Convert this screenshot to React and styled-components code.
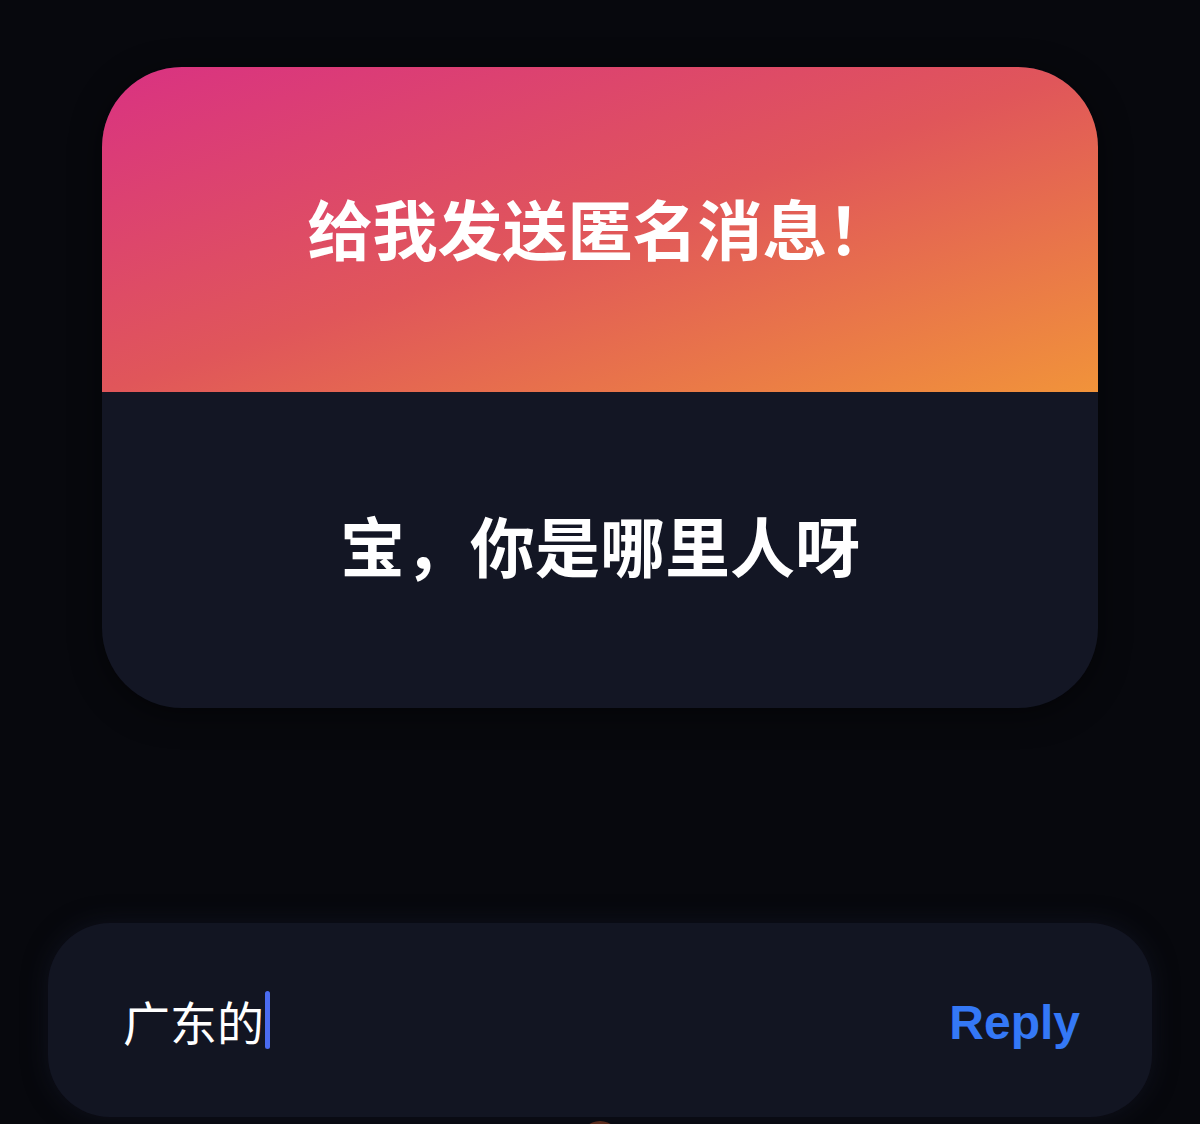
import React from "react";
import styled, { createGlobalStyle } from "styled-components";

const Global = createGlobalStyle`
  html, body { margin: 0; padding: 0; background: #07080d; }
  body { font-family: "Noto Sans CJK SC", "Noto Sans", sans-serif; }
`;

const Page = styled.div`
  width: 1200px;
  height: 1124px;
  overflow: hidden;
  background: #07080d;
  display: flex;
  flex-direction: column;
  align-items: center;
  padding-top: 67px;
  box-sizing: border-box;
`;

const Card = styled.div`
  width: 996px;
  flex-shrink: 0;
  border-radius: 80px;
  overflow: hidden;
  background: #131624;
  display: flex;
  flex-direction: column;
  box-shadow: 0 6px 30px rgba(0, 0, 0, 0.5);
`;

const CardHeader = styled.div`
  height: 325px;
  flex-shrink: 0;
  box-sizing: border-box;
  padding-bottom: 4px;
  background: linear-gradient(to bottom right, #d93282 0%, #e0565a 50%, #f1933a 100%);
  display: flex;
  align-items: center;
  justify-content: center;
`;

const CardBody = styled.div`
  height: 316px;
  flex-shrink: 0;
  box-sizing: border-box;
  padding-bottom: 12px;
  display: flex;
  align-items: center;
  justify-content: center;
`;

const BigText = styled.div`
  color: #ffffff;
  font-family: "Noto Sans CJK SC", sans-serif;
  font-weight: 700;
  font-size: ${(p) => p.$size}px;
  line-height: 1;
`;

const ReplyBar = styled.div`
  margin-top: 215px;
  width: 1104px;
  height: 194px;
  flex-shrink: 0;
  border-radius: 62px;
  background: #121522;
  display: flex;
  align-items: center;
  justify-content: space-between;
  padding: 0 72px 0 75px;
  box-sizing: border-box;
  box-shadow: 0 0 24px rgba(20, 24, 40, 0.6);
`;

const InputText = styled.div`
  display: flex;
  align-items: center;
  color: #ffffff;
  font-family: "Noto Sans CJK SC", sans-serif;
  font-weight: 400;
  font-size: 47px;
  line-height: 1;
`;

const Caret = styled.span`
  display: inline-block;
  width: 5px;
  height: 58px;
  border-radius: 3px;
  background: #4a6bf0;
  margin-left: 1px;
`;

const ReplyButton = styled.button`
  border: none;
  background: none;
  padding: 6px 0 0;
  color: #3478f6;
  font-family: "Liberation Sans", Arial, sans-serif;
  font-weight: 700;
  font-size: 48px;
  line-height: 1;
  cursor: pointer;
`;

const Peek = styled.div`
  margin-top: 4px;
  width: 40px;
  height: 40px;
  border-radius: 50%;
  flex-shrink: 0;
  background: radial-gradient(circle at 50% 30%, #6b3320, #3a1d18);
`;

export default function App() {
  return (
    <>
      <Global />
      <Page>
        <Card>
          <CardHeader>
            <BigText $size={65}>给我发送匿名消息！</BigText>
          </CardHeader>
          <CardBody>
            <BigText $size={65}>宝，你是哪里人呀</BigText>
          </CardBody>
        </Card>
        <ReplyBar>
          <InputText>
            广东的
            <Caret />
          </InputText>
          <ReplyButton>Reply</ReplyButton>
        </ReplyBar>
        <Peek />
      </Page>
    </>
  );
}
